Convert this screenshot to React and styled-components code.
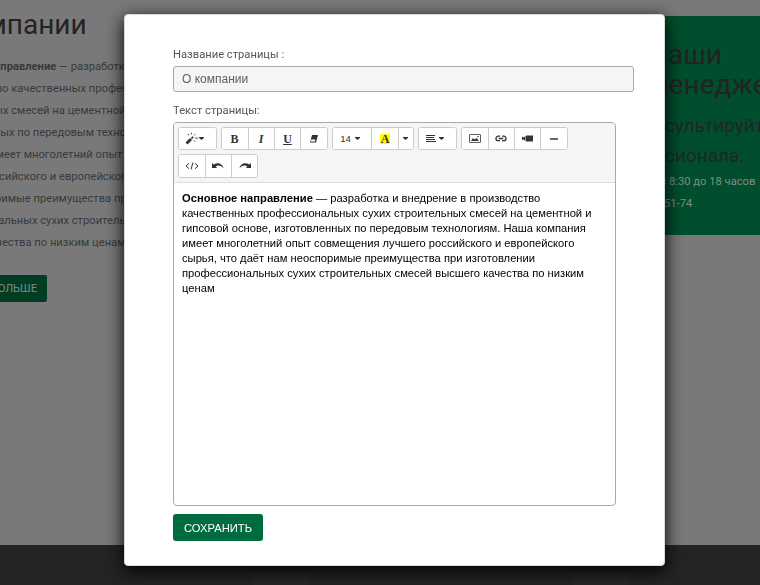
import React from "react";
import styled, { createGlobalStyle } from "styled-components";

const Global = createGlobalStyle`
  * { box-sizing: border-box; }
  html, body { margin: 0; overflow: hidden; }
  body { font: 11.2px/22px Roboto, sans-serif; background: #797979; }
`;

const Page = styled.div`
  height: 585px;
  overflow: hidden;
  display: flex;
  flex-direction: column;
  background: #797979;
`;
const Main = styled.main`
  height: 545px;
  display: flex;
  justify-content: space-between;
`;
const Article = styled.article`
  width: 400px;
  margin-left: -66px;
  padding-top: 7px;
  color: #38393b;
  white-space: nowrap;
`;
const Title = styled.h1`
  margin: 0 0 14px -5px;
  font-size: 28px;
  line-height: 35px;
  font-weight: 400;
  color: #232323;
`;
const Line = styled.div`
  height: 22px;
  margin-left: ${(p) => p.$shift || 0}px;
`;
const MoreButton = styled.button`
  width: 104px;
  height: 27px;
  margin: 21px 0 0 9px;
  padding: 0 10px 0 0;
  border: 0;
  border-radius: 2px;
  background: #003d22;
  color: #7f8c86;
  font: 11.2px Roboto, sans-serif;
  text-align: right;
`;
const Contacts = styled.aside`
  width: 122px;
  height: 219px;
  margin-top: 16px;
  padding-top: 24px;
  background: #004e2d;
  color: #7d8d85;
  white-space: nowrap;
`;
const PanelTitle = styled.h2`
  margin: 0 0 11px 10px;
  font-size: 28px;
  line-height: 30px;
  font-weight: 400;
  color: #232323;
`;
const PanelLead = styled.p`
  margin: 0 0 0 -40px;
  font-size: 19px;
  line-height: 30px;
  color: #202625;
`;
const LeadLine = styled.span`
  display: block;
  margin-left: ${(p) => p.$shift || 0}px;
`;
const Footer = styled.footer`
  height: 40px;
  background: #232425;
  display: flex;
  align-items: flex-end;
  padding-left: 254px;
  gap: 265px;
`;
const FooterTile = styled.div`
  width: 55px;
  height: 13px;
  background: #292627;
`;

const Overlay = styled.div`
  position: fixed;
  inset: 0;
  padding: 14px 0 0 124px;
`;
const Dialog = styled.form`
  width: 541px;
  height: 552px;
  border-radius: 4px;
  background: #fff;
  border: 1px solid #d9dada;
  padding: 29px 30px 0 48px;
  box-shadow: 0 5px 18px #000;
`;
const Label = styled.label`
  display: block;
  height: 22px;
  color: #54565a;
`;
const Input = styled.input`
  display: block;
  width: 461px;
  height: 26px;
  margin-bottom: 8px;
  padding: 0 8px;
  border: 1px solid #a9a9a9;
  border-radius: 3px;
  background: #f5f5f5;
  color: #606060;
  font: 12px "Liberation Sans", sans-serif;
`;
const Editor = styled.section`
  width: 443px;
  height: 384px;
  border: 1px solid #a9a9a9;
  border-radius: 4px;
  overflow: hidden;
`;
const Toolbar = styled.div`
  height: 60px;
  display: flex;
  flex-wrap: wrap;
  align-content: flex-start;
  gap: 4px;
  padding: 4px;
  background: #f5f5f5;
  border-bottom: 1px solid #ddd;
`;
const Group = styled.div`
  height: ${(p) => (p.$tall ? 24 : 23)}px;
  display: flex;
  border: 1px solid #ccc;
  border-radius: 3px;
  background: #fff;
  overflow: hidden;
`;
const Tool = styled.button`
  width: ${(p) => p.$w || 26}px;
  display: flex;
  align-items: center;
  justify-content: center;
  gap: ${(p) => p.$gap || 0}px;
  padding: 0 ${(p) => p.$end || 0}px 0 0;
  border: 0;
  background: #fff;
  color: #333;
  font: 9.6px "Liberation Sans", sans-serif;
  & + & { border-left: 1px solid #ccc; }
  svg { display: block; flex: none; }
`;
const Glyph = styled.span`
  font: bold 12px/14px "Liberation Serif", serif;
  font-style: ${(p) => (p.$italic ? "italic" : "normal")};
  text-decoration: ${(p) => (p.$under ? "underline" : "none")};
  text-underline-offset: 1px;
`;
const Marker = styled.span`
  width: 10px;
  height: 10px;
  background: #ff0;
  font: bold 12px/10px "Liberation Serif", serif;
  display: flex;
  justify-content: center;
`;

const Svg = ({ w = 14, h = 12, children }) => (
  <svg width={w} height={h} viewBox={`0 0 ${w} ${h}`} fill="none" stroke="#333">
    {children}
  </svg>
);
const Caret = () => (
  <Svg w={5} h={3}>
    <path d="M0 0h5v.8L2.5 3 0 .8z" fill="#333" stroke="none" />
  </Svg>
);
const Content = styled.div`
  padding: 8px;
  font: 11.2px/15px "Liberation Sans", sans-serif;
  color: #000;
  white-space: nowrap;
`;
const Save = styled.button`
  display: block;
  width: 90px;
  height: 27px;
  margin-top: 8px;
  padding: 0;
  border: 0;
  border-radius: 3px;
  background: #006b3f;
  color: #fff;
  font: 11.2px "Liberation Sans", sans-serif;
`;

const Wand = () => (
  <Svg w={14} h={13}>
    <path d="M1.5 11.5 6 7" strokeWidth="2.8" />
    <path d="M6.4 6.4 8.2 4.8" strokeWidth="1.8" />
    <path d="M6.3 .8v1.6M2.8 2l1.2 1.2M10.4 2 9.2 3.2M10.4 6.2h2.4M9 8.4l1.2 1.2" strokeWidth="1" />
  </Svg>
);
const Eraser = () => (
  <Svg w={10} h={10}>
    <path d="M3 1h6L7 8.5H1z" fill="#333" stroke="none" />
    <path d="M2.2 5.6h4.2l-.5 2H1.7z" fill="#fff" stroke="none" />
  </Svg>
);
const Align = () => (
  <Svg w={10} h={7}>
    <path d="M0 .5h9M0 2.5h8M0 4.5h9M0 6.5h10" strokeWidth="1.1" />
  </Svg>
);
const Picture = () => (
  <Svg w={12} h={9}>
    <rect x=".5" y=".5" width="11" height="8" rx=".5" strokeWidth=".8" />
    <path d="m2 7 2-3 1.4 1.5L7.5 4 10 7z" fill="#333" stroke="none" />
    <circle cx="9" cy="2.7" r=".8" fill="#333" stroke="none" />
  </Svg>
);
const Link = () => (
  <Svg w={12} h={7}>
    <path d="M5 1.2H3.2a2.2 2.2 0 0 0 0 4.5H5M7 1.2h1.8a2.2 2.2 0 0 1 0 4.5H7M3.7 3.5h4.6" strokeWidth="1.3" />
  </Svg>
);
const Video = () => (
  <Svg w={11} h={7}>
    <path d="M4 .5h7v6H4zM0 1.5l1.5 1L3.5 1v5l-2-1.5L0 5z" fill="#333" stroke="none" />
  </Svg>
);
const Code = () => (
  <Svg w={14} h={8}>
    <path d="M4 1.3 1 4l3 2.7M10 1.3 13 4l-3 2.7M8 .5l-2 7" strokeWidth="1" />
  </Svg>
);
const Undo = () => (
  <Svg w={12} h={8}>
    <path d="M0 1v5h5.2L3.7 4.4C6 2.9 9.5 3.4 11.6 6.6 10.8 1.3 5.5-.3 1.8 2.6z" fill="#333" stroke="none" />
  </Svg>
);
const Redo = () => (
  <Svg w={12} h={8}>
    <path d="M12 1v5H6.8l1.5-1.6C6 2.9 2.5 3.4 .4 6.6 1.2 1.3 6.5-.3 10.2 2.6z" fill="#333" stroke="none" />
  </Svg>
);
const Rule = () => (
  <Svg w={8} h={2}>
    <path d="M0 1h8" strokeWidth="1.4" />
  </Svg>
);

const articleLines = [
  <><b>Основное направление</b> — разработка и</>,
  "производство качественных профессиональных",
  "строительных смесей на цементной и",
  "изготовленных по передовым технологиям",
  "компания имеет многолетний опыт",
  "лучшего российского и европейского",
  "нам неоспоримые преимущества при",
  "профессиональных сухих строительных",
  "высшего качества по низким ценам",
];

export default function App() {
  return (
    <>
      <Global />
      <Page>
        <Main>
          <Article>
            <Title>О компании</Title>
            {articleLines.map((text, i) => (
              <Line key={i}>{text}</Line>
            ))}
            <MoreButton>БОЛЬШЕ</MoreButton>
          </Article>
          <Contacts>
            <PanelTitle>Наши<br />менеджеры</PanelTitle>
            <PanelLead>
              <LeadLine>Проконсультируйтесь</LeadLine>
              <LeadLine $shift={-13}>у профессионала:</LeadLine>
            </PanelLead>
            <Line $shift={7}>ан с 8:30 до 18 часов</Line>
            <Line $shift={17}>8 51-74</Line>
          </Contacts>
        </Main>
        <Footer><FooterTile /><FooterTile /></Footer>
      </Page>
      <Overlay>
        <Dialog onSubmit={(e) => e.preventDefault()}>
          <Label>Название страницы :</Label>
          <Input defaultValue="О компании" />
          <Label>Текст страницы:</Label>
          <Editor>
            <Toolbar>
              <Group><Tool $w={37} $end={7}><Wand /><Caret /></Tool></Group>
              <Group>
                <Tool $end={1}><Glyph>B</Glyph></Tool>
                <Tool $end={1}><Glyph $italic>I</Glyph></Tool>
                <Tool><Glyph $under>U</Glyph></Tool>
                <Tool $w={27}><Eraser /></Tool>
              </Group>
              <Group>
                <Tool $w={38} $gap={4} $end={4}>14<Caret /></Tool>
                <Tool $w={27}><Marker>A</Marker></Tool>
                <Tool $w={15} $end={1}><Caret /></Tool>
              </Group>
              <Group><Tool $w={37} $gap={3} $end={5}><Align /><Caret /></Tool></Group>
              <Group>
                <Tool><Picture /></Tool>
                <Tool $end={1}><Link /></Tool>
                <Tool><Video /></Tool>
                <Tool $w={27}><Rule /></Tool>
              </Group>
              <Group $tall>
                <Tool $end={1}><Code /></Tool>
                <Tool $end={1}><Undo /></Tool>
                <Tool><Redo /></Tool>
              </Group>
            </Toolbar>
            <Content>
              <b>Основное направление</b> — разработка и внедрение в производство<br />
              качественных профессиональных сухих строительных смесей на цементной и<br />
              гипсовой основе, изготовленных по передовым технологиям. Наша компания<br />
              имеет многолетний опыт совмещения лучшего российского и европейского<br />
              сырья, что даёт нам неоспоримые преимущества при изготовлении<br />
              профессиональных сухих строительных смесей высшего качества по низким<br />
              ценам
            </Content>
          </Editor>
          <Save type="submit">СОХРАНИТЬ</Save>
        </Dialog>
      </Overlay>
    </>
  );
}
